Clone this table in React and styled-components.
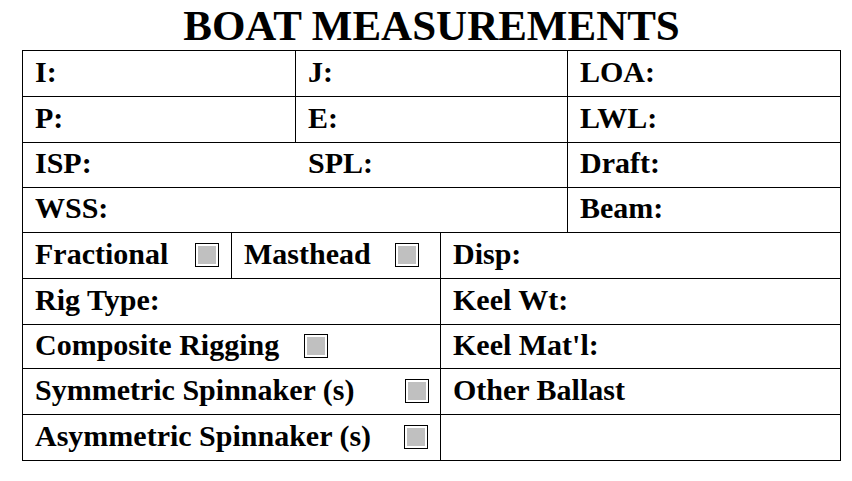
import React from "react";
import styled, { createGlobalStyle } from "styled-components";

const GlobalStyle = createGlobalStyle`
  html, body {
    margin: 0;
    padding: 0;
    background: #fff;
  }

  body {
    font-family: "Liberation Serif", "Times New Roman", serif;
    color: #000;
  }
`

const Sheet = styled.div`
  width: 819px;
  margin-left: 22px;
`

const Title = styled.h1`
  margin: 0;
  height: 50px;
  line-height: 52px;
  font-size: 43px;
  font-weight: bold;
  text-align: center;
`

const Table = styled.div`
  border: 1px solid #000;
  border-bottom: none;
`

const Row = styled.div`
  display: flex;
  box-sizing: border-box;
  height: ${p => p.h}px;
  border-bottom: 1px solid #000;
`

const Cell = styled.div`
  box-sizing: border-box;
  display: flex;
  align-items: center;
  padding: 0 0 4px 12px;
  font-size: 30px;
  font-weight: bold;
  white-space: nowrap;
  width: ${p => (p.w ? `${p.w}px` : "auto")};
  flex: ${p => (p.w ? "none" : "1")};
  border-right: ${p => (p.open || !p.w ? "none" : "1px solid #000")};
`

const Check = styled.span`
  box-sizing: border-box;
  display: inline-block;
  flex: none;
  width: 24px;
  height: 24px;
  margin-left: ${p => p.gap}px;
  margin-top: 2px;
  border: 1.5px solid #000;
  padding: 2px;
  background: #fff;

  &::after {
    content: "";
    display: block;
    width: 100%;
    height: 100%;
    background: #c0c0c0;
  }
`

const App = () => (
  <>
    <GlobalStyle />
    <Sheet>
      <Title>BOAT MEASUREMENTS</Title>
      <Table>
        <Row h={46}>
          <Cell w={273}>I:</Cell>
          <Cell w={272}>J:</Cell>
          <Cell>LOA:</Cell>
        </Row>
        <Row h={46}>
          <Cell w={273}>P:</Cell>
          <Cell w={272}>E:</Cell>
          <Cell>LWL:</Cell>
        </Row>
        <Row h={45}>
          <Cell w={273} open>ISP:</Cell>
          <Cell w={272}>SPL:</Cell>
          <Cell>Draft:</Cell>
        </Row>
        <Row h={45}>
          <Cell w={545}>WSS:</Cell>
          <Cell>Beam:</Cell>
        </Row>
        <Row h={46}>
          <Cell w={209}>Fractional<Check gap={27} /></Cell>
          <Cell w={209}>Masthead<Check gap={24} /></Cell>
          <Cell>Disp:</Cell>
        </Row>
        <Row h={46}>
          <Cell w={418}>Rig Type:</Cell>
          <Cell>Keel Wt:</Cell>
        </Row>
        <Row h={44}>
          <Cell w={418}>Composite Rigging<Check gap={25} /></Cell>
          <Cell>Keel Mat'l:</Cell>
        </Row>
        <Row h={46}>
          <Cell w={418}>Symmetric Spinnaker (s)<Check gap={51} /></Cell>
          <Cell>Other Ballast</Cell>
        </Row>
        <Row h={46}>
          <Cell w={418}>Asymmetric Spinnaker (s)<Check gap={33} /></Cell>
          <Cell />
        </Row>
      </Table>
    </Sheet>
  </>
)

export default App;
